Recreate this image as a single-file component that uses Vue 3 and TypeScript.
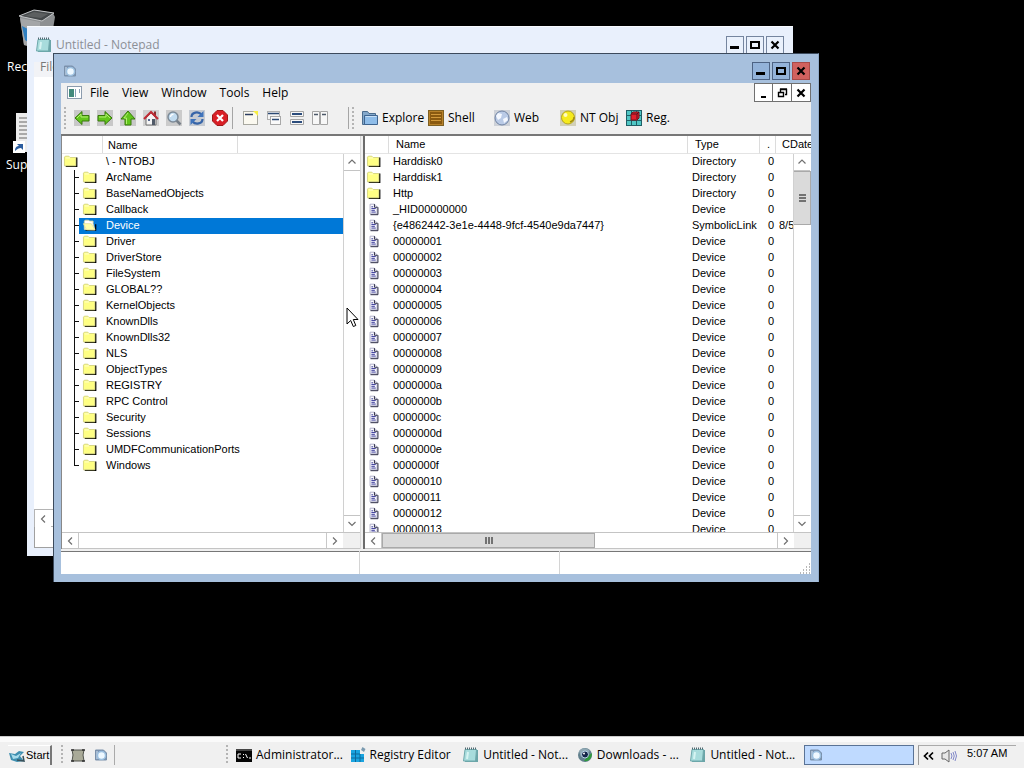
<script setup lang="ts">
interface Entry {
  name: string
  type: string
  date?: string
}

const menus: string[] = ['File', 'View', 'Window', 'Tools', 'Help']

const navTools = [
  { icon: 'back', label: 'Back' },
  { icon: 'forward', label: 'Forward' },
  { icon: 'up', label: 'Up' },
  { icon: 'home', label: 'Home' },
  { icon: 'search', label: 'Search' },
  { icon: 'refresh', label: 'Refresh' },
  { icon: 'stop', label: 'Stop' },
]

const windowTools = [
  { icon: 'win-new', label: 'New window' },
  { icon: 'win-cascade', label: 'Cascade' },
  { icon: 'win-rows', label: 'Tile horizontally' },
  { icon: 'win-cols', label: 'Tile vertically' },
]

const rootTools = [
  { icon: 'explore', label: 'Explore' },
  { icon: 'shell', label: 'Shell' },
  { icon: 'web', label: 'Web' },
  { icon: 'ntobj', label: 'NT Obj' },
  { icon: 'reg', label: 'Reg.' },
]

const folders: string[] = [
  'ArcName', 'BaseNamedObjects', 'Callback', 'Device', 'Driver', 'DriverStore',
  'FileSystem', 'GLOBAL??', 'KernelObjects', 'KnownDlls', 'KnownDlls32', 'NLS',
  'ObjectTypes', 'REGISTRY', 'RPC Control', 'Security', 'Sessions',
  'UMDFCommunicationPorts', 'Windows',
]
const selected = 'Device'

const entries: Entry[] = [
  { name: 'Harddisk0', type: 'Directory' },
  { name: 'Harddisk1', type: 'Directory' },
  { name: 'Http', type: 'Directory' },
  { name: '_HID00000000', type: 'Device' },
  { name: '{e4862442-3e1e-4448-9fcf-4540e9da7447}', type: 'SymbolicLink', date: '8/5' },
  ...Array.from({ length: 19 }, (_, i) => ({
    name: (i + 1).toString(16).padStart(8, '0'),
    type: 'Device',
  })),
]

const tasks = [
  { icon: 'cmd', label: 'Administrator...' },
  { icon: 'regedit', label: 'Registry Editor' },
  { icon: 'notepad', label: 'Untitled - Not...' },
  { icon: 'globe', label: 'Downloads - ...' },
  { icon: 'notepad', label: 'Untitled - Not...' },
]
</script>

<template>
  <div class="screen">
    <svg class="defs" aria-hidden="true">
      <symbol id="folder" viewBox="0 0 16 16">
        <path d="M2 14h12.500V4" fill="none" stroke="#000" stroke-width="1.600" />
        <path d="M.5 13.500v-10l1-1h4l1.500 1.500h6.500v9.500z" fill="#ffff84" stroke="#d2d27a" />
        <path d="M2 4.500h5" stroke="#ffffd8" />
      </symbol>
      <symbol id="folder-open" viewBox="0 0 16 16">
        <path d="M3 14h11.500V7" fill="none" stroke="#000" stroke-width="1.400" />
        <path d="M1.500 13V3.500l1-1h4l1 1h4v3l2 7z" fill="#fff" stroke="#d8d8a0" />
        <path d="M.5 6.500h9l4 7H4z" fill="#ffffa8" stroke="#e4e4a0" />
      </symbol>
      <symbol id="doc" viewBox="0 0 16 16">
        <path d="M3.500 2.500h5l3 3v8h-8z" fill="#fbfbff" stroke="#a8a8c4" />
        <path d="M8.500 2.500v3.500h3.500M12.500 6v8.500H4" fill="none" stroke="#14142e" />
        <path d="M5 5.500h2M5 7.500h5M5 9.500h4M5 11.500h5" stroke="#20208a" />
      </symbol>
      <symbol id="back" viewBox="0 0 16 16">
        <rect width="16" height="16" fill="#c8c8c8" />
        <path d="M1 8L8 1.500v4h7v5.500H8v3.500z" fill="#62c51c" stroke="#38780c" />
        <path d="M3 8l4-4v3h7" fill="none" stroke="#b2ee70" />
      </symbol>
      <symbol id="forward" viewBox="0 0 16 16">
        <rect width="16" height="16" fill="#c8c8c8" />
        <path d="M15 8L8 1.500v4H1v5.500h7v3.500z" fill="#62c51c" stroke="#38780c" />
        <path d="M2 7h7V4l4 4" fill="none" stroke="#b2ee70" />
      </symbol>
      <symbol id="up" viewBox="0 0 16 16">
        <rect width="16" height="16" fill="#c8c8c8" />
        <path d="M8 1L1 9h4v6h6V9h4z" fill="#62c51c" stroke="#38780c" />
        <path d="M8 3L4 8h2.500v6" fill="none" stroke="#b2ee70" />
      </symbol>
      <symbol id="home" viewBox="0 0 16 16">
        <rect width="16" height="16" fill="#d0d0d0" />
        <path d="M3 8l5-5 5 5v7H3z" fill="#f4f4f4" stroke="#707070" />
        <path d="M12 1.500v5" stroke="#8a2f2f" stroke-width="2" />
        <path d="M1 9l7-7 7 7" fill="none" stroke="#c02a34" stroke-width="2" />
        <path d="M5 9h2v2H5z" fill="#5a6a90" />
        <path d="M9 9h3v6H9z" fill="#505a68" />
      </symbol>
      <symbol id="search" viewBox="0 0 16 16">
        <rect width="16" height="16" fill="#cbcbcb" />
        <path d="M10.500 10.500l4 4" stroke="#777f88" stroke-width="2.500" />
        <circle cx="7" cy="7" r="5" fill="#c2dcf0" stroke="#7d8b98" stroke-width="1.500" />
        <path d="M4.500 7a2.500 2.500 0 0 1 3-2.500" fill="none" stroke="#fff" stroke-width="1.300" />
      </symbol>
      <symbol id="refresh" viewBox="0 0 16 16">
        <rect width="16" height="16" fill="#c6cbd2" />
        <path d="M2.500 7c0-5 7-6 10-2.500" fill="none" stroke="#3765a8" stroke-width="2.200" />
        <path d="M14.500 1v6h-6z" fill="#3f74bc" />
        <path d="M13.500 9c0 5-7 6-10 2.500" fill="none" stroke="#3765a8" stroke-width="2.200" />
        <path d="M1.500 15V9h6z" fill="#3f74bc" />
      </symbol>
      <symbol id="stop" viewBox="0 0 16 16">
        <path d="M5 .5h6L15.500 5v6L11 15.500H5L.5 11V5z" fill="#d91f26" stroke="#a01818" />
        <path d="M5 5l6 6M11 5l-6 6" stroke="#fff" stroke-width="2.200" />
      </symbol>
      <symbol id="win-new" viewBox="0 0 16 16">
        <rect x=".5" y="1.500" width="14" height="13" fill="#fbf9f0" stroke="#a8a8a0" />
        <path d="M2 4.500h8" stroke="#2c3d60" stroke-width="1.500" />
        <path d="M10 1h5v5z" fill="#f7ee42" />
      </symbol>
      <symbol id="win-cascade" viewBox="0 0 16 16">
        <rect x="1.500" y="1.500" width="12" height="8" fill="#f5f5f5" stroke="#b0b0b0" />
        <path d="M2 3.500h11" stroke="#2c4a74" stroke-width="1.500" />
        <rect x="4.500" y="6.500" width="10" height="8" fill="#fafafa" stroke="#a8a8a8" />
        <path d="M6 9.500h7" stroke="#2c4a74" stroke-width="1.500" />
      </symbol>
      <symbol id="win-rows" viewBox="0 0 16 16">
        <path d="M1.500 1.500h13v5h-13zM1.500 9.500h13v5h-13z" fill="#f7f7f7" stroke="#a4a4a4" />
        <path d="M3 4h10M3 12h10" stroke="#2b4c7c" stroke-width="2" />
      </symbol>
      <symbol id="win-cols" viewBox="0 0 16 16">
        <path d="M.5 1.500h7v13h-7zM8.500 1.500h7v13h-7z" fill="#f7f7f7" stroke="#a4a4a4" />
        <path d="M2 4.500h4M10 4.500h4" stroke="#4c5868" stroke-width="1.500" />
      </symbol>
      <symbol id="explore" viewBox="0 0 16 16">
        <path d="M.5 14.500v-13h5l1.500 2h6.500v11z" fill="#85a9cb" stroke="#4c6d8e" />
        <path d="M2.500 14.500v-9h13v9z" fill="#8fbde9" stroke="#3f6590" />
        <path d="M3.500 6.500h11" stroke="#c9e1f7" />
      </symbol>
      <symbol id="shell" viewBox="0 0 16 16">
        <rect x=".5" y=".5" width="15" height="15" fill="#b8822a" stroke="#7e6022" />
        <path d="M2 2h12v12H2z" fill="#8a5a10" />
        <path d="M3 4.500h10M3 7.500h10M3 10.500h10" stroke="#d29a3c" />
      </symbol>
      <symbol id="web" viewBox="0 0 16 16">
        <rect width="16" height="16" fill="#cdd1d8" />
        <circle cx="8" cy="8" r="7" fill="#b9cae6" stroke="#7083a2" />
        <path d="M4 3l4 1-1 4-3 2-2-4zM9 9l4-2 1 3-4 3z" fill="#f4f8ff" />
      </symbol>
      <symbol id="ntobj" viewBox="0 0 16 16">
        <rect width="16" height="16" fill="#d2d0b8" />
        <circle cx="8" cy="7.500" r="6.500" fill="#f6ea1c" stroke="#b5a41c" />
        <path d="M10 12c3-1 4-3 4-5" fill="none" stroke="#a08c14" stroke-width="1.500" />
        <circle cx="5.500" cy="5" r="2" fill="#fffbc0" />
      </symbol>
      <symbol id="reg" viewBox="0 0 16 16">
        <rect width="16" height="16" fill="#4fc6c4" />
        <path d="M.5 0v16M5.500 0v16M10.500 0v16M15.500 0v16M0 .5h16M0 5.500h16M0 10.500h16M0 15.500h16" stroke="#1f5f66" />
        <path d="M5 4l2-2h6v6l-2 2H5z" fill="#e0202c" stroke="#7c1018" />
        <path d="M11 4v5M5 4h6l2-2" fill="none" stroke="#58101c" />
      </symbol>
      <symbol id="notepad" viewBox="0 0 16 16">
        <path d="M3 3h12v12H2z" fill="#6ba5a8" />
        <path d="M2 2.500h11.500L12.500 14H.5z" fill="#a8dcdc" stroke="#6fa9ac" />
        <path d="M5 5l-1 7" stroke="#d6f4f2" stroke-width="2" />
        <path d="M2 1.500h12" stroke="#506870" stroke-width="2" stroke-dasharray="1 1" />
      </symbol>
      <symbol id="explorer" viewBox="0 0 16 16">
        <path d="M2.500 3h8l3 3v7h-11z" fill="#7d95b3" stroke="#7a90aa" />
        <path d="M3 4h2v8H3z" fill="#a9bdd3" />
        <circle cx="8.500" cy="8.500" r="4" fill="#eef8ff" stroke="#9cc0e0" stroke-width="1.500" />
      </symbol>
      <symbol id="cmd" viewBox="0 0 16 16">
        <rect y="2" width="16" height="13" fill="#050505" />
        <path d="M0 3h16" stroke="#888" />
        <path d="M5 7H2v4h3M7.500 7v1M7.500 10v1M9.500 7l2 4M13 11h2" fill="none" stroke="#fff" />
      </symbol>
      <symbol id="regedit" viewBox="0 0 16 16">
        <path d="M1 3h9v4h4v8H1z" fill="#1aa4e0" />
        <path d="M1 7h9M1 11h13M5.500 3v12M10 7v8" stroke="#0d6a9c" />
        <path d="M12.500 0l3 2-1.500 3-3-2z" fill="#7b9bb0" />
      </symbol>
      <symbol id="globe" viewBox="0 0 16 16">
        <circle cx="8" cy="8" r="7" fill="#607f8c" />
        <path d="M2 4c4-4 8-3 11 0l-4 3-5 3z" fill="#8fa8b4" />
        <path d="M7 14c5 1 8-3 8-8l-4 3z" fill="#2f9a3c" />
        <circle cx="8" cy="7.500" r="3.500" fill="#15254a" stroke="#b8d4e8" />
        <circle cx="7" cy="6.500" r="1" fill="#fff" />
      </symbol>
      <symbol id="min" viewBox="0 0 16 16"><path d="M3 10.500h9" stroke="#000" stroke-width="3" /></symbol>
      <symbol id="min-small" viewBox="0 0 16 16"><path d="M5 12h5" stroke="#000" stroke-width="2" /></symbol>
      <symbol id="max" viewBox="0 0 16 16"><path d="M4 5h8v6H4z" fill="none" stroke="#000" stroke-width="2" /></symbol>
      <symbol id="restore" viewBox="0 0 16 16">
        <path d="M6.500 7V4.500h6v5H11M6 4h7" fill="none" stroke="#000" stroke-width="1.400" />
        <path d="M4.500 7.500h5v4h-5zM4 7.500h6" fill="none" stroke="#000" stroke-width="1.400" />
      </symbol>
      <symbol id="close" viewBox="0 0 16 16"><path d="M4.500 4.500l7 7M11.500 4.500l-7 7" stroke="#000" stroke-width="2.200" /></symbol>
      <symbol id="chev-up" viewBox="0 0 16 16"><path d="M4.500 9.500L8 6l3.500 3.500" fill="none" stroke="#707070" stroke-width="1.200" /></symbol>
      <symbol id="chev-down" viewBox="0 0 16 16"><path d="M4.500 6L8 9.500 11.500 6" fill="none" stroke="#707070" stroke-width="1.200" /></symbol>
      <symbol id="chev-left" viewBox="0 0 16 16"><path d="M10 4.500L6.500 8l3.500 3.500" fill="none" stroke="#707070" stroke-width="1.200" /></symbol>
      <symbol id="chev-right" viewBox="0 0 16 16"><path d="M6 4.500L9.500 8 6 11.500" fill="none" stroke="#707070" stroke-width="1.200" /></symbol>
    </svg>

    <main class="desktop">
      <div class="shortcut bin">
        <svg viewBox="0 0 40 40" class="pic">
          <path d="M3 8l15-7 18 3 2 4-5 30-11 2-15-4z" fill="#8d9092" />
          <path d="M2 7l15-6 20 3-12 8z" fill="#44484a" stroke="#c4c6c8" />
          <path d="M7 7l10-4 14 2-7 4z" fill="#5c5f60" />
          <path d="M3 9l20 4v26L7 36z" fill="#a4a6a8" />
          <path d="M5 17l6 3-1 8 4 2-1 4-5-3z" fill="#2f7fc0" />
        </svg>
        <span>Rec</span>
      </div>
      <div class="shortcut sup">
        <svg viewBox="0 0 40 40" class="pic">
          <path d="M5 0h26v39H5z" fill="#ececec" />
          <path d="M8 5h8M8 9h8M8 13h8M8 17h8M8 21h8M8 25h8" stroke="#666" />
          <path d="M2 28h12v12H2z" fill="#fff" />
          <path d="M4 38c0-4 2-5 4-5l-2-2h6v6l-2-2c-2 0-4 1-6 3z" fill="#2a5c9e" />
        </svg>
        <span>Sup</span>
      </div>

      <section class="notepad" aria-label="Notepad">
        <header class="np-title">
          <svg class="ico"><use href="#notepad" /></svg>
          <span class="np-name">Untitled - Notepad</span>
          <button class="cap" aria-label="Minimize Notepad"><svg class="ico"><use href="#min" /></svg></button>
          <button class="cap" aria-label="Maximize Notepad"><svg class="ico"><use href="#max" /></svg></button>
          <button class="cap" aria-label="Close Notepad"><svg class="ico"><use href="#close" /></svg></button>
        </header>
        <div class="np-menu">File</div>
        <div class="np-body"></div>
        <div class="np-scroll">
          <button class="sb" aria-label="Scroll Notepad left"><svg class="ico"><use href="#chev-left" /></svg></button>
        </div>
        <div class="np-status"></div>
      </section>

      <section class="win" aria-label="Object explorer">
        <header class="title">
          <svg class="ico"><use href="#explorer" /></svg>
          <span class="grow"></span>
          <button class="cap" aria-label="Minimize"><svg class="ico"><use href="#min" /></svg></button>
          <button class="cap" aria-label="Maximize"><svg class="ico"><use href="#max" /></svg></button>
          <button class="cap red" aria-label="Close"><svg class="ico"><use href="#close" /></svg></button>
        </header>
        <div class="client">
          <nav class="menu">
            <svg class="sys" viewBox="0 0 16 14">
              <rect x=".5" y=".5" width="14" height="12" fill="#fff" stroke="#8c9cae" />
              <path d="M2 3h5v8H2z" fill="#438a7c" />
              <path d="M8 3h1v8H8zM12 3h1v4h-1z" fill="#8aa0b8" />
            </svg>
            <button v-for="m in menus" :key="m" class="menu-item">{{ m }}</button>
            <span class="grow"></span>
            <div class="mdi">
              <button aria-label="Minimize child"><svg class="ico"><use href="#min-small" /></svg></button>
              <button aria-label="Restore child"><svg class="ico"><use href="#restore" /></svg></button>
              <button aria-label="Close child"><svg class="ico"><use href="#close" /></svg></button>
            </div>
          </nav>

          <div class="tools">
            <span class="grip"></span>
            <div class="tool-set">
              <button v-for="t in navTools" :key="t.icon" :aria-label="t.label">
                <svg class="ico"><use :href="'#' + t.icon" /></svg>
              </button>
            </div>
            <span class="rule"></span>
            <div class="tool-set">
              <button v-for="t in windowTools" :key="t.icon" :aria-label="t.label">
                <svg class="ico"><use :href="'#' + t.icon" /></svg>
              </button>
            </div>
            <span class="rule far"></span>
            <span class="grip"></span>
            <div class="roots">
              <button v-for="t in rootTools" :key="t.icon">
                <svg class="ico"><use :href="'#' + t.icon" /></svg><span>{{ t.label }}</span>
              </button>
            </div>
          </div>

          <div class="panes">
            <div class="tree-pane">
              <div class="tree-head"><span></span><span>Name</span><span></span></div>
              <div class="tree-body">
                <ul class="tree">
                  <li class="root"><svg class="ico"><use href="#folder" /></svg><span>\ - NTOBJ</span></li>
                  <li v-for="f in folders" :key="f" class="node">
                    <span class="branch"></span>
                    <span class="label" :class="{ on: f === selected }">
                      <svg class="ico"><use :href="f === selected ? '#folder-open' : '#folder'" /></svg>{{ f }}
                    </span>
                  </li>
                </ul>
                <div class="vs">
                  <button class="sb" aria-label="Scroll tree up"><svg class="ico"><use href="#chev-up" /></svg></button>
                  <button class="sb" aria-label="Scroll tree down"><svg class="ico"><use href="#chev-down" /></svg></button>
                </div>
              </div>
              <div class="hs">
                <button class="sb" aria-label="Scroll tree left"><svg class="ico"><use href="#chev-left" /></svg></button>
                <span class="grow"></span>
                <button class="sb" aria-label="Scroll tree right"><svg class="ico"><use href="#chev-right" /></svg></button>
                <span class="corner"></span>
              </div>
            </div>
            <div class="split"></div>
            <div class="list-pane">
              <div class="list-view">
                <table>
                  <colgroup><col class="c-icon" /><col /><col class="c-type" /><col class="c-num" /><col class="c-date" /></colgroup>
                  <thead>
                    <tr><th></th><th>Name</th><th>Type</th><th>.</th><th>CDate</th></tr>
                  </thead>
                  <tbody>
                    <tr v-for="e in entries" :key="e.name">
                      <td><svg class="ico"><use :href="e.type === 'Directory' ? '#folder' : '#doc'" /></svg></td>
                      <td>{{ e.name }}</td>
                      <td>{{ e.type }}</td>
                      <td class="num">0</td>
                      <td>{{ e.date }}</td>
                    </tr>
                  </tbody>
                </table>
                <div class="vs over">
                  <button class="sb" aria-label="Scroll list up"><svg class="ico"><use href="#chev-up" /></svg></button>
                  <div class="thumb tall"><svg viewBox="0 0 16 16" class="ico"><path d="M5 5h7M5 8h7M5 11h7" stroke="#505050" stroke-width="1.500" /></svg></div>
                  <span class="grow"></span>
                  <button class="sb" aria-label="Scroll list down"><svg class="ico"><use href="#chev-down" /></svg></button>
                </div>
              </div>
              <div class="hs">
                <button class="sb" aria-label="Scroll list left"><svg class="ico"><use href="#chev-left" /></svg></button>
                <div class="track">
                  <div class="thumb wide"><svg viewBox="0 0 16 16" class="ico"><path d="M5 4v7M8 4v7M11 4v7" stroke="#505050" stroke-width="1.500" /></svg></div>
                </div>
                <button class="sb" aria-label="Scroll list right"><svg class="ico"><use href="#chev-right" /></svg></button>
                <span class="corner"></span>
              </div>
            </div>
          </div>

          <footer class="status">
            <span></span><span></span><span></span>
            <svg class="size" viewBox="0 0 12 12"><path d="M10 2h1M7 5h1M10 5h1M4 8h1M7 8h1M10 8h1M1 11h1M4 11h1M7 11h1M10 11h1" stroke="#a0a0a0" stroke-width="1.500" /></svg>
          </footer>
        </div>
      </section>

      <svg class="pointer" viewBox="0 0 13 21">
        <path d="M1 1v16l3.700-3.500 2.600 6 2.500-1-2.500-6H12z" fill="#fff" stroke="#000" />
      </svg>
    </main>

    <footer class="taskbar">
      <button class="start">
        <svg class="ico" viewBox="0 0 16 16">
          <path d="M0 6l6 1 4-3 5 1-4 4 4 5-7 1-6-2z" fill="#3f8fb0" />
          <path d="M2 7l5 2 5-3-3 5-5 1z" fill="#a8dcec" />
          <path d="M8 13l7 1-1-5" fill="none" stroke="#38525c" stroke-width="1.500" />
        </svg>Start
      </button>
      <span class="grip"></span>
      <div class="quick">
        <button aria-label="Show desktop">
          <svg class="ico" viewBox="0 0 16 16">
            <path d="M2 3h12l-1 5 1 6H2l1-6z" fill="#a9aa98" stroke="#50534c" />
            <path d="M1 3h3M12 3h3M1 14h3M12 14h3" stroke="#303030" stroke-width="1.500" />
          </svg>
        </button>
        <button aria-label="Explorer"><svg class="ico"><use href="#explorer" /></svg></button>
      </div>
      <span class="grip second"></span>
      <div class="tasks">
        <button v-for="(t, i) in tasks" :key="i" class="task">
          <svg class="ico"><use :href="'#' + t.icon" /></svg><span>{{ t.label }}</span>
        </button>
        <button class="task active" aria-label="Object explorer window"><svg class="ico"><use href="#explorer" /></svg></button>
      </div>
      <div class="tray">
        <button aria-label="Show hidden icons">
          <svg class="ico" viewBox="0 0 16 16"><path d="M7 4.500L3.500 8 7 11.500M12 4.500L8.500 8l3.500 3.500" fill="none" stroke="#000" stroke-width="1.700" /></svg>
        </button>
        <svg class="ico" viewBox="0 0 16 16">
          <path d="M1 5h3l4-3v12l-4-3H1z" fill="#e8e8e8" stroke="#666" />
          <path d="M10 5q2 3 0 6M12 4q2.500 4 0 8M14 3q3 5 0 10" fill="none" stroke="#8087c8" />
        </svg>
        <time>5:07 AM</time>
      </div>
    </footer>
  </div>
</template>

<style>
html, body { margin: 0; background: #000; }
</style>

<style scoped>
.screen {
  display: flex; flex-direction: column; height: 100vh; overflow: hidden;
  background: #000; color: #000; font: 12px/16px "Open Sans", "Noto Sans", sans-serif;
}
.screen *, .screen *::before, .screen *::after { box-sizing: border-box; }
.defs { position: absolute; width: 0; height: 0; }
.ico { width: 16px; height: 16px; display: block; flex: none; }
.grow { flex: 1; }
button { font: inherit; color: inherit; padding: 0; margin: 0; border: 0; background: none; display: flex; align-items: center; flex: none; }

.desktop { position: relative; flex: 1; min-height: 0; }
.shortcut { position: absolute; color: #fff; display: flex; flex-direction: column; align-items: flex-start; gap: 10px; }
.bin { left: 7px; top: 9px; }
.sup { left: 6px; top: 113px; gap: 4px; }
.pic { width: 40px; height: 40px; margin-left: 10px; }
.sup .pic { margin-left: 5px; }

.notepad {
  position: absolute; left: 27px; top: 26px; right: 231px; bottom: 180px;
  display: flex; flex-direction: column; padding: 0 7px 8px; background: #e9f0fc; border-top: 1px solid #f8fbff;
}
.np-title { display: flex; align-items: center; height: 35px; padding: 1px 2px 0; gap: 2px; }
.np-name { flex: 1; color: #8c8f96; padding-left: 2px; }
.cap { width: 18px; height: 18px; border: 1px solid #75859f; background: #eaf1fc; }
.np-menu { height: 15px; line-height: 10px; padding-left: 6px; color: #777; background: #f2f3f6; }
.np-body { flex: 1; background: #fff; }
.np-scroll { border: 1px solid #b4b4b4; background: #fff; height: 18px; }
.np-status { height: 21px; border: 1px solid #a0a0a0; border-top: 0; background: #fff; }

.win {
  position: absolute; left: 53px; top: 53px; right: 205px; bottom: 154px;
  display: flex; flex-direction: column; padding: 0 7px 8px; background: #a7c0dd;
  border: 1px solid #3c4a5c; border-right-color: #8fa9c8; border-bottom: 0;
}
.title { display: flex; align-items: center; gap: 2px; height: 29px; padding: 5px 1px 0; }
.title .cap { background: #93b3da; border-color: #4d6384; }
.title .cap.red { background: #d1615e; border-color: #a84a48; }
.client { flex: 1; min-height: 0; display: flex; flex-direction: column; background: #f0f0f0; }
.menu { display: flex; height: 19px; padding-left: 6px; gap: 13px; align-items: center; }
.sys { width: 16px; height: 14px; margin-right: -6px; }
.menu-item { height: 19px; }
.mdi { display: flex; height: 19px; }
.mdi button { width: 19px; border: 1px solid #707070; border-left-width: 0; background: #fff; justify-content: center; }
.mdi button:first-child { border-left-width: 1px; }
.tools { display: flex; align-items: center; height: 32px; padding-left: 3px; }
.grip { width: 4px; height: 22px; flex: none; background: radial-gradient(circle at 1px 1px, #b4b4b4 1px, transparent 1px) 0 0 / 4px 4px; }
.tool-set { display: flex; gap: 7px; padding: 0 4px 0 6px; }
.tool-set + .rule + .tool-set { padding: 0 20px 0 10px; }
.rule { width: 1px; height: 22px; background: #a5a5a5; }
.rule.far { margin-right: 3px; }
.roots { display: flex; padding-left: 6px; }
.roots button { width: 66px; gap: 4px; white-space: nowrap; }

.panes { flex: 1; min-height: 0; display: flex; border-top: 2px solid #777; background: #fff; font: 11px/14px "Liberation Sans", Arial, sans-serif; }
.tree-pane { width: 299px; flex: none; display: flex; flex-direction: column; border-left: 1px solid #888; }
.tree-head { display: flex; height: 18px; border-bottom: 1px solid #e4e4e4; line-height: 18px; }
.tree-head span { border-right: 1px solid #dcdcdc; }
.tree-head span:nth-child(1) { width: 41px; }
.tree-head span:nth-child(2) { width: 135px; padding-left: 5px; }
.tree-head span:nth-child(3) { flex: 1; border: 0; }
.tree-body { flex: 1; min-height: 0; display: flex; }
.tree { flex: 1; margin: 0; padding: 0; list-style: none; overflow: hidden; }
.tree li { display: flex; height: 16px; }
.tree .ico, td .ico { height: 14px; }
.root { padding-left: 1px; gap: 27px; }
.branch { width: 5px; height: 16px; margin-left: 12px; flex: none; border-left: 1px solid #111; }
.branch::after { content: ""; display: block; height: 8px; border-bottom: 1px solid #111; }
.node:last-child .branch { height: 8px; }
.label { flex: 1; display: flex; gap: 8px; padding-left: 3px; }
.label.on { background: #0078d7; color: #fff; }
.vs { width: 17px; flex: none; display: flex; flex-direction: column; justify-content: space-between; border-left: 1px solid #d0d0d0; background: #fff; }
.vs.over { position: absolute; top: 18px; right: 0; bottom: 0; width: 18px; }
.vs .sb:first-child { border-bottom: 1px solid #c4c4c4; }
.vs .sb:last-child { border-top: 1px solid #c4c4c4; }
.sb { width: 16px; height: 17px; background: #fff; justify-content: center; }
.hs { display: flex; height: 17px; flex: none; border-top: 1px solid #c4c4c4; border-bottom: 1px solid #c4c4c4; }
.hs .sb { width: 17px; height: 15px; }
.hs .sb:first-child { border-right: 1px solid #c8c8c8; }
.hs .sb:nth-child(3) { border-left: 1px solid #c8c8c8; }
.corner { width: 17px; background: #f0f0f0; }
.split { width: 5px; flex: none; background: #f0f0f0; border-left: 1px solid #d8d8d8; border-right: 2px solid #6c6c6c; }
.list-pane { flex: 1; min-width: 0; display: flex; flex-direction: column; }
.list-view { flex: 1; min-height: 0; overflow: hidden; position: relative; }
table { width: 100%; border-collapse: separate; border-spacing: 0; table-layout: fixed; }
.c-icon { width: 24px; }
.c-type { width: 72px; }
.c-num { width: 16px; }
.c-date { width: 35px; }
th { font-weight: 400; text-align: left; height: 18px; line-height: 17px; padding: 0 0 0 7px; border-bottom: 1px solid #e4e4e4; border-right: 1px solid #dcdcdc; white-space: nowrap; overflow: hidden; }
th:last-child { border-right: 0; padding-left: 6px; }
td { height: 16px; padding: 0 0 0 4px; white-space: nowrap; vertical-align: top; }
td:first-child { padding-left: 1px; }
td.num { padding: 0 2px 0 0; text-align: right; }
td:last-child { padding-left: 3px; }
.thumb { background: #dadada; border: 1px solid #a9a9a9; display: flex; align-items: center; justify-content: center; }
.tall { height: 54px; width: 17px; border-left: 0; }
.track { flex: 1; display: flex; }
.wide { width: 54%; }
.status { display: flex; height: 25px; flex: none; border-top: 2px solid #f0f0f0; background: #fff; box-shadow: inset 0 1px #777; }
.status span { border-right: 1px solid #d4d4d4; }
.status span:nth-child(1) { width: 299px; }
.status span:nth-child(2) { width: 200px; }
.status span:nth-child(3) { flex: 1; border: 0; }
.size { width: 12px; height: 12px; align-self: flex-end; }
.pointer { position: absolute; left: 346px; top: 307px; width: 13px; height: 21px; }

.taskbar { display: flex; align-items: center; height: 32px; flex: none; padding: 4px 8px 0; background: #f0f0f0; border-top: 1px solid #ccc; box-shadow: inset 0 5px #fafafa; }
.start { width: 44px; height: 20px; padding-left: 1px; gap: 1px; font: 11px/16px "Liberation Sans", Arial, sans-serif; border-right: 2px solid #777; border-top: 1px solid #fff; }
.taskbar .grip { margin-left: 9px; height: 20px; }
.quick { display: flex; gap: 7px; padding: 1px 5px; height: 20px; border-right: 1px solid #aaa; }
.taskbar .grip.second { margin-left: 111px; }
.tasks { display: flex; flex: 1; gap: 4px; padding: 0 4px 0 6px; min-width: 0; }
.task { flex: 1; min-width: 0; height: 20px; gap: 4px; white-space: nowrap; overflow: hidden; }
.task.active { flex: 0 0 110px; background: #bfdaff; border: 1px solid #5a7396; padding-left: 3px; }
.tray { display: flex; gap: 4px; width: 98px; height: 20px; padding: 2px 2px 0; border-left: 1px solid #999; border-top: 1px solid #aaa; font: 11px/11px "Liberation Sans", Arial, sans-serif; }
.tray time { padding-left: 6px; white-space: nowrap; }
</style>
